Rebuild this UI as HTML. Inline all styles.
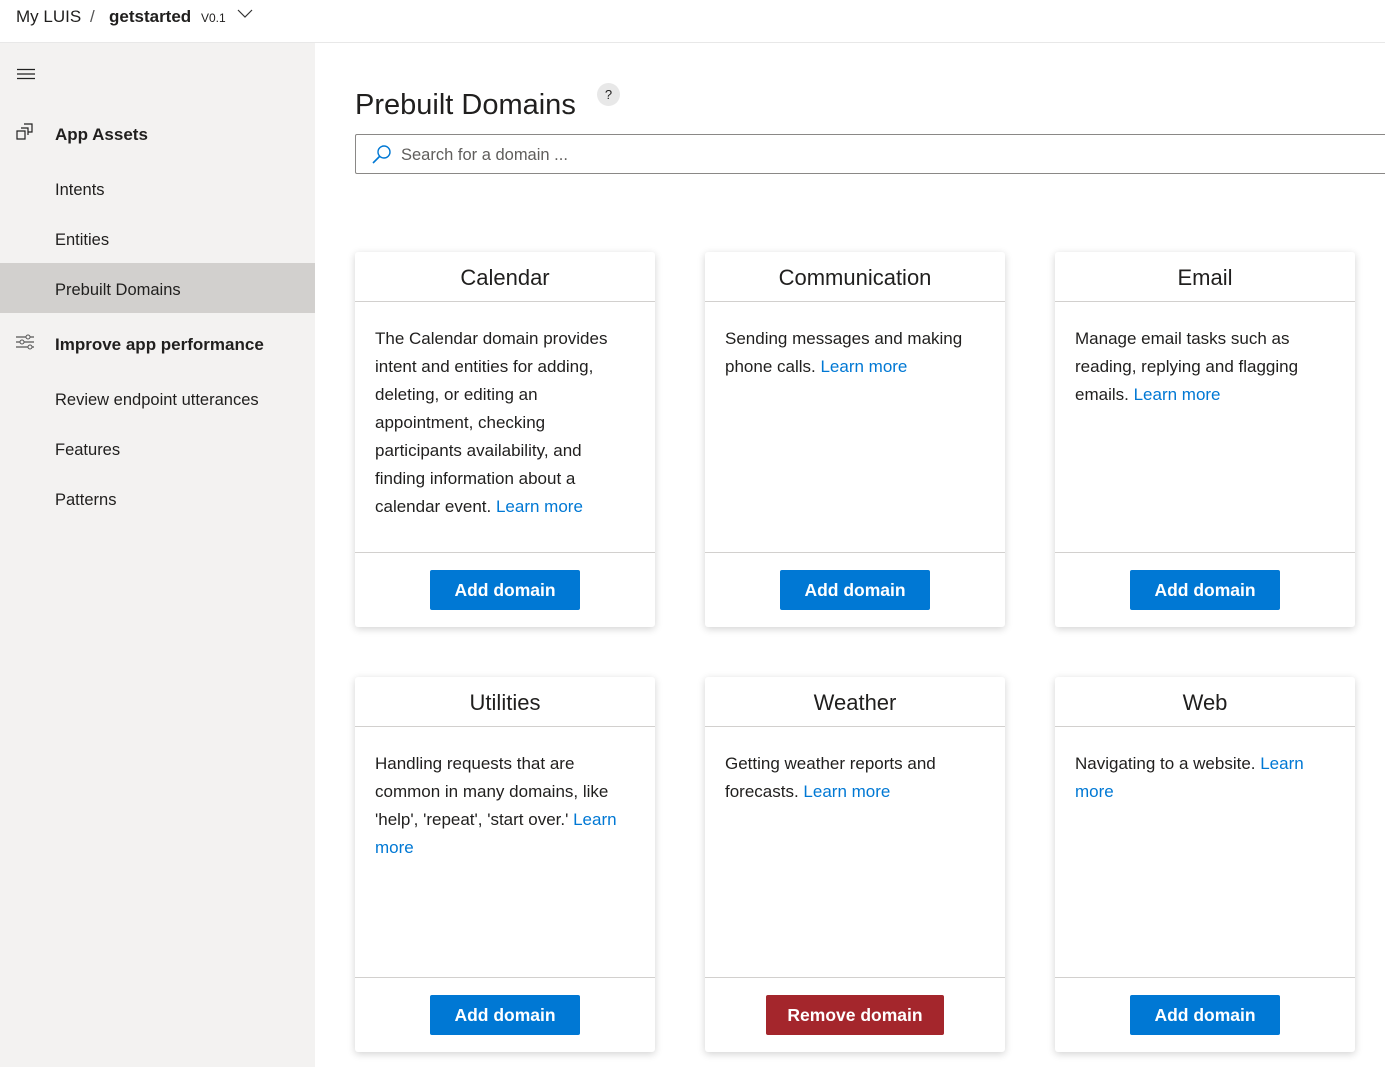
<!DOCTYPE html>
<html><head><meta charset="utf-8"><style>
*{box-sizing:border-box;margin:0;padding:0}
body{width:1385px;height:1067px;overflow:hidden;font-family:"Liberation Sans",sans-serif;color:#201f1e;background:#fff;position:relative}
.top{position:absolute;left:0;top:0;width:1385px;height:43px;border-bottom:1px solid #e8e8e8;background:#fff}
.top span{position:absolute;top:7px;font-size:17px}
.side{position:absolute;left:0;top:43px;width:315px;height:1024px;background:#f3f2f1}
.side .it{position:absolute;left:55px;font-size:16.5px;color:#201f1e}
.side .sel{position:absolute;left:0;top:220px;width:315px;height:50px;background:#d2d0ce}
h1{position:absolute;left:355px;top:89px;font-weight:normal;font-size:29px;color:#201f1e}
.q{position:absolute;left:597px;top:83px;width:23px;height:23px;border-radius:50%;background:#e8e8e8;font-size:13px;text-align:center;line-height:23px}
.search{position:absolute;left:355px;top:134px;width:1040px;height:40px;border:1px solid #8a8886;border-radius:2px}
.search span{position:absolute;left:45px;top:11px;font-size:16.5px;color:#605e5c}
.card{position:absolute;width:300px;height:375px;background:#fff;border-radius:3px;box-shadow:0 2px 8px rgba(0,0,0,.18)}
.card .h{height:50px;border-bottom:1px solid #d2d0ce;text-align:center;font-size:22px;line-height:51px}
.card .b{height:251px;border-bottom:1px solid #d2d0ce;padding:23px 20px 0;font-size:17px;line-height:28px}
.card a{color:#0078d4;text-decoration:none}
.btn{position:absolute;top:318px;left:75px;width:150px;height:40px;background:#0078d4;color:#fff;font-weight:bold;font-size:17.5px;text-align:center;line-height:41px;border-radius:2px}
.red{background:#a4262c;left:61px;width:178px}
</style></head><body>
<div class="top">
<span style="left:16px">My LUIS</span><span style="left:90px;color:#555">/</span><span style="left:109px;font-weight:bold;font-size:17px">getstarted</span><span style="left:201px;top:11px;font-size:12px">V0.1</span>
<svg style="position:absolute;left:237px;top:9px" width="16" height="10"><path d="M1 1l7 7 7-7" fill="none" stroke="#333" stroke-width="1.2"/></svg>
</div>
<div class="side">
<svg style="position:absolute;left:17px;top:25px" width="18" height="12"><path d="M0 1.5h18M0 6h18M0 10.5h18" stroke="#222" stroke-width="1.2"/></svg>
<svg style="position:absolute;left:16px;top:80px" width="20" height="20"><path d="M1 8h8v8H1zM5 5h7v7M8 1h8v8h-4" fill="none" stroke="#222" stroke-width="1.2"/></svg>
<div class="it" style="top:82px;font-weight:bold;font-size:17px">App Assets</div>
<div class="it" style="top:138px">Intents</div>
<div class="it" style="top:188px">Entities</div>
<div class="sel"></div>
<div class="it" style="top:238px">Prebuilt Domains</div>
<svg style="position:absolute;left:16px;top:291px" width="20" height="16"><path d="M0 3h18M0 8h18M0 13h18" stroke="#555" stroke-width="1.2"/><circle cx="12" cy="3" r="2" fill="#f3f2f1" stroke="#555"/><circle cx="6" cy="8" r="2" fill="#f3f2f1" stroke="#555"/><circle cx="14" cy="13" r="2" fill="#f3f2f1" stroke="#555"/></svg>
<div class="it" style="top:292px;font-weight:bold;font-size:17px">Improve app performance</div>
<div class="it" style="top:348px">Review endpoint utterances</div>
<div class="it" style="top:398px">Features</div>
<div class="it" style="top:448px">Patterns</div>
</div>
<h1>Prebuilt Domains</h1><div class="q">?</div>
<div class="search"><svg style="position:absolute;left:15px;top:9px" width="22" height="22"><circle cx="13" cy="8" r="6" fill="none" stroke="#0078d4" stroke-width="1.4"/><path d="M8.5 12.5L2 19" stroke="#0078d4" stroke-width="1.6"/></svg><span>Search for a domain ...</span></div>

<div class="card" style="left:355px;top:252px"><div class="h">Calendar</div><div class="b">The Calendar domain provides intent and entities for adding, deleting, or editing an appointment, checking participants availability, and finding information about a calendar event. <a>Learn more</a></div><div class="btn">Add domain</div></div>
<div class="card" style="left:705px;top:252px"><div class="h">Communication</div><div class="b">Sending messages and making phone calls. <a>Learn more</a></div><div class="btn">Add domain</div></div>
<div class="card" style="left:1055px;top:252px"><div class="h">Email</div><div class="b">Manage email tasks such as reading, replying and flagging emails. <a>Learn more</a></div><div class="btn">Add domain</div></div>
<div class="card" style="left:355px;top:677px"><div class="h">Utilities</div><div class="b">Handling requests that are common in many domains, like 'help', 'repeat', 'start over.' <a>Learn more</a></div><div class="btn">Add domain</div></div>
<div class="card" style="left:705px;top:677px"><div class="h">Weather</div><div class="b">Getting weather reports and forecasts. <a>Learn more</a></div><div class="btn red">Remove domain</div></div>
<div class="card" style="left:1055px;top:677px"><div class="h">Web</div><div class="b">Navigating to a website. <a>Learn more</a></div><div class="btn">Add domain</div></div>
</body></html>
